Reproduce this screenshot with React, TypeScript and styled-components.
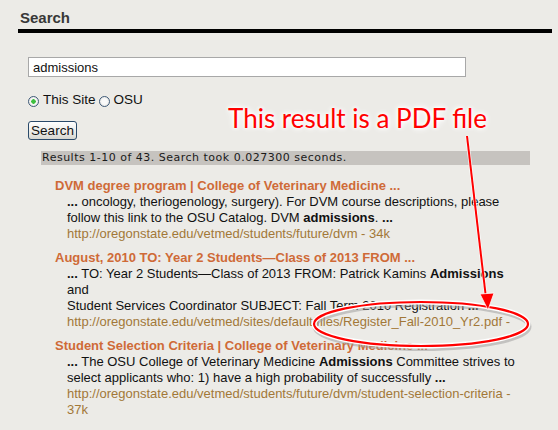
import React from 'react'
import styled, { createGlobalStyle } from 'styled-components'

const GlobalStyle = createGlobalStyle`
  html, body {
    margin: 0;
    padding: 0;
    background: #ecebe7;
  }
  body {
    font-family: 'Liberation Sans', Arial, sans-serif;
    color: #111;
  }
`

const Page = styled.div`
  position: relative;
  width: 558px;
  height: 430px;
  overflow: hidden;
  padding: 10px 6px 0 18px;
  box-sizing: border-box;
`

const Heading = styled.h2`
  margin: 0;
  padding: 0 0 3px 2px;
  font-size: 15px;
  line-height: 16px;
  font-weight: bold;
  color: #383838;
  border-bottom: 4px solid #000;
`

const Form = styled.form`
  display: flex;
  flex-direction: column;
  align-items: flex-start;
  margin: 24px 0 0 10px;
`

const TextInput = styled.input`
  width: 438px;
  height: 20px;
  box-sizing: border-box;
  border: 1px solid #a8a8a8;
  background: #fff;
  padding: 0 4px;
  font-family: 'Liberation Sans', Arial, sans-serif;
  font-size: 13px;
  color: #111;
  outline: none;
`

const RadioRow = styled.div`
  display: flex;
  align-items: center;
  gap: 3px;
  height: 16px;
  margin-top: 14px;
  font-size: 13.5px;
  color: #111;
`

const RadioLabel = styled.label`
  display: flex;
  align-items: center;
  gap: 4px;
`

const RadioDot = styled.span<{ $checked?: boolean }>`
  width: 11px;
  height: 11px;
  margin-top: 4px;
  border-radius: 50%;
  border: 1px solid #3f5a78;
  background: radial-gradient(circle at 50% 50%, ${(p) => (p.$checked ? '#3fbf3f 0, #3fbf3f 2px, ' : '')}#fafafa 2.5px, #dcdcd8 100%);
  box-sizing: border-box;
`

const Button = styled.button`
  margin-top: 14px;
  width: 49px;
  height: 19px;
  padding: 0;
  border: 1px solid #2a4a6a;
  border-radius: 3px;
  background: linear-gradient(#ffffff, #e6e6e2 70%, #d6d6d0);
  font-family: 'Liberation Sans', Arial, sans-serif;
  font-size: 13.5px;
  color: #111;
`

const Summary = styled.div`
  margin: 11px 0 0 23px;
  width: 488px;
  height: 14px;
  background: #c6c3bf;
  font-family: 'DejaVu Sans', Verdana, sans-serif;
  font-size: 11px;
  line-height: 14px;
  letter-spacing: 0.5px;
  padding-left: 1px;
  color: #1a1a1a;
  white-space: nowrap;
`

const ResultList = styled.ol`
  list-style: none;
  margin: 13px 0 0 37px;
  padding: 0;
  display: flex;
  flex-direction: column;
  gap: 8px;
`

const Result = styled.li`
  font-size: 13px;
  line-height: 16px;
`

const Title = styled.a`
  display: block;
  font-weight: bold;
  color: #cf6a37;
  text-decoration: none;
  white-space: nowrap;
`

const Snippet = styled.div`
  padding-left: 12px;
  color: #111;
  white-space: nowrap;
`

const Url = styled.div`
  padding-left: 12px;
  color: #a27838;
  white-space: nowrap;
`

const Callout = styled.div`
  position: absolute;
  left: 228px;
  top: 101px;
  font-family: Lato, 'Liberation Sans', sans-serif;
  font-size: 26px;
  line-height: 34px;
  color: #ff0000;
  white-space: nowrap;
  text-shadow: 0 0 3px #fff, 0 0 4px #fff, 0 0 6px #fff, 0 0 8px #fff;
`

const Overlay = styled.svg`
  position: absolute;
  left: 0;
  top: 0;
  pointer-events: none;
`

type Line = React.ReactNode

interface Item {
  title: string
  lines: Line[]
  url: string[]
}

const results: Item[] = [
  {
    title: 'DVM degree program | College of Veterinary Medicine ...',
    lines: [
      <><b>...</b> oncology, theriogenology, surgery). For DVM course descriptions, please</>,
      <>follow this link to the OSU Catalog. DVM <b>admissions</b>. <b>...</b></>,
    ],
    url: ['http://oregonstate.edu/vetmed/students/future/dvm - 34k'],
  },
  {
    title: 'August, 2010 TO: Year 2 Students\u2014Class of 2013 FROM ...',
    lines: [
      <><b>...</b> TO: Year 2 Students{'\u2014'}Class of 2013 FROM: Patrick Kamins <b>Admissions</b></>,
      <>and</>,
      <>Student Services Coordinator SUBJECT: Fall Term 2010 Registration <b>...</b></>,
    ],
    url: ['http://oregonstate.edu/vetmed/sites/default/files/Register_Fall-2010_Yr2.pdf -'],
  },
  {
    title: 'Student Selection Criteria | College of Veterinary Medicine ...',
    lines: [
      <><b>...</b> The OSU College of Veterinary Medicine <b>Admissions</b> Committee strives to</>,
      <>select applicants who: 1) have a high probability of successfully <b>...</b></>,
    ],
    url: ['http://oregonstate.edu/vetmed/students/future/dvm/student-selection-criteria -', '37k'],
  },
]

export default function App() {
  return (
    <>
      <GlobalStyle />
      <Page>
        <Heading>Search</Heading>
        <Form onSubmit={(e) => e.preventDefault()}>
          <TextInput defaultValue="admissions" />
          <RadioRow>
            <RadioLabel>
              <RadioDot $checked />
              This Site
            </RadioLabel>
            <RadioLabel>
              <RadioDot />
              OSU
            </RadioLabel>
          </RadioRow>
          <Button type="submit">Search</Button>
        </Form>
        <Summary>Results 1-10 of 43. Search took 0.027300 seconds.</Summary>
        <ResultList>
          {results.map((r) => (
            <Result key={r.title}>
              <Title href="#">{r.title}</Title>
              {r.lines.map((l, i) => (
                <Snippet key={i}>{l}</Snippet>
              ))}
              {r.url.map((u) => (
                <Url key={u}>{u}</Url>
              ))}
            </Result>
          ))}
        </ResultList>

        <Overlay width="558" height="430" viewBox="0 0 558 430">
          <ellipse cx="421" cy="325" rx="107" ry="22" fill="none" stroke="#9a9a9a" strokeWidth="5" opacity="0.5" transform="translate(1 1.5)" />
          <ellipse cx="421" cy="324" rx="107" ry="22" fill="none" stroke="#fff" strokeWidth="5" />
          <ellipse cx="421" cy="324" rx="107" ry="22" fill="none" stroke="#ff0000" strokeWidth="2.2" />
          <line x1="467" y1="136" x2="486" y2="298" stroke="#fff" strokeWidth="3.5" opacity="0.8" />
          <line x1="467" y1="136" x2="486" y2="298" stroke="#ff0000" strokeWidth="2" />
          <polygon points="480,294 494,293 488,310" fill="#ff0000" stroke="#fff" strokeWidth="0.8" />
        </Overlay>
        <Callout>This result is a PDF file</Callout>
      </Page>
    </>
  )
}
